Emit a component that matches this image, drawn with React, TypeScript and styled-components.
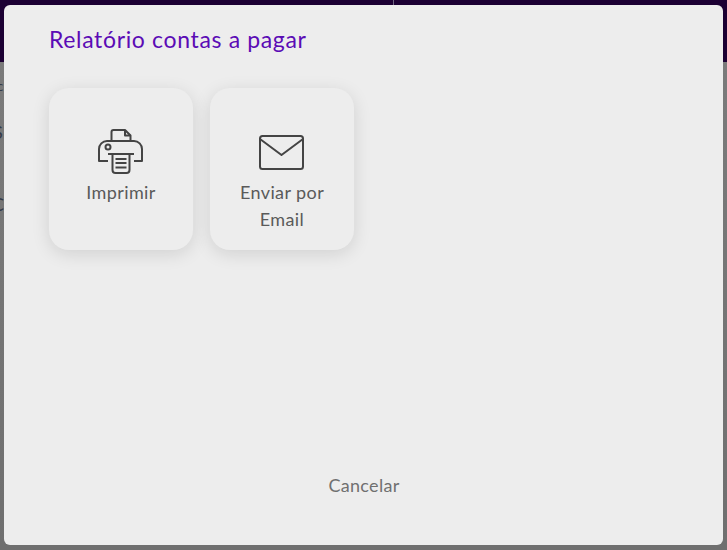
import styled, { createGlobalStyle } from 'styled-components'

const GlobalStyle = createGlobalStyle`
    html, body {
        margin: 0;
        height: 100%;
        overflow: hidden;
    }

    body {
        font-family: 'Lato', 'Open Sans', sans-serif;
    }
`

const Page = styled.div`
    background: linear-gradient(#7c7c7c, #6f6f6f);
    display: flex;
    flex-direction: column;
    height: 550px;
    overflow: hidden;
    width: 727px;
`

const TopBar = styled.header`
    background-color: #1c0033;
    display: flex;
    flex: 0 0 62px;
    justify-content: flex-end;
`

const TopBarDivider = styled.div`
    background-color: #6f6480;
    height: 100%;
    margin-right: 333px;
    width: 1px;
`

const BehindList = styled.div`
    color: #333a48;
    display: flex;
    flex-direction: column;
    padding-top: 14px;
`

const BehindRow = styled.div<{ $gap: number; $size: number; $shift: number }>`
    font-size: ${(p) => p.$size}px;
    line-height: 20px;
    margin-bottom: ${(p) => p.$gap}px;
    margin-left: ${(p) => p.$shift}px;
`

const Overlay = styled.div`
    box-sizing: border-box;
    display: flex;
    height: 550px;
    left: 0;
    padding: 5px 4px;
    position: fixed;
    top: 0;
    width: 727px;
`

const Modal = styled.section`
    background-color: #ededed;
    border-radius: 6px;
    display: flex;
    flex: 1;
    flex-direction: column;
    padding: 20px 45px 47px;
`

const Title = styled.h2`
    color: #5b0bb5;
    font-size: 23px;
    font-weight: 400;
    letter-spacing: 0.65px;
    line-height: 28px;
    margin: 0 0 35px;
`

const Options = styled.div`
    align-items: flex-start;
    display: flex;
    flex: 1;
    gap: 17px;
`

const OptionCard = styled.button`
    align-items: center;
    background-color: #ededed;
    border: 0;
    border-radius: 20px;
    box-shadow: 0 4px 18px rgb(0 0 0 / 12%);
    color: #5a5a5a;
    cursor: pointer;
    display: flex;
    flex-direction: column;
    font-family: inherit;
    font-size: 18px;
    height: 162px;
    letter-spacing: 0.4px;
    line-height: 27px;
    padding: 40px 12px 0;
    width: 144px;
`

const IconSlot = styled.div`
    align-items: center;
    display: flex;
    flex: 0 0 48px;
    justify-content: center;
    margin-bottom: 3px;
`

const CancelButton = styled.button`
    align-self: center;
    background: none;
    border: 0;
    color: #707070;
    cursor: pointer;
    font-family: inherit;
    font-size: 18px;
    letter-spacing: 0.3px;
    line-height: 24px;
    margin: 0 0 1px 1px;
    padding: 0;
`

const PrinterIcon = () => (
    <svg width="46" height="46" viewBox="0 0 46 46" fill="none" stroke="#444" strokeWidth="2" strokeLinejoin="round">
        <path d="M13.5 12V3a2 2 0 0 1 2-2H27l5.5 5.5V12" />
        <path d="M27 1v5.5h5.500" />
        <path d="M10 32H1V20a8 8 0 0 1 8-8h27a8 8 0 0 1 8 8v12h-8" />
        <circle cx="10" cy="18" r="2.500" />
        <path d="M10 25h26" />
        <path d="M14.500 25v16a3 3 0 0 0 3 3h11a3 3 0 0 0 3-3V25" />
        <path d="M17.500 30h11M17.500 34h11M17.500 38.500h11" />
    </svg>
)

const MailIcon = () => (
    <svg width="46" height="35" viewBox="0 0 46 35" fill="none" stroke="#444" strokeWidth="2" strokeLinejoin="round">
        <rect x="1" y="1" width="43" height="33" rx="2.500" />
        <path d="M1 4l21.500 16L44 4" />
    </svg>
)

export default function App() {
    return (
        <>
            <GlobalStyle />
            <Page>
                <TopBar>
                    <TopBarDivider />
                </TopBar>
                <BehindList>
                    <BehindRow $gap={26} $size={13} $shift={-3}>c</BehindRow>
                    <BehindRow $gap={52} $size={18} $shift={-7}>S</BehindRow>
                    <BehindRow $gap={0} $size={18} $shift={-8}>C</BehindRow>
                </BehindList>
            </Page>
            <Overlay>
                <Modal>
                    <Title>Relatório contas a pagar</Title>
                    <Options>
                        <OptionCard>
                            <IconSlot>
                                <PrinterIcon />
                            </IconSlot>
                            Imprimir
                        </OptionCard>
                        <OptionCard>
                            <IconSlot>
                                <MailIcon />
                            </IconSlot>
                            Enviar por Email
                        </OptionCard>
                    </Options>
                    <CancelButton>Cancelar</CancelButton>
                </Modal>
            </Overlay>
        </>
    )
}
